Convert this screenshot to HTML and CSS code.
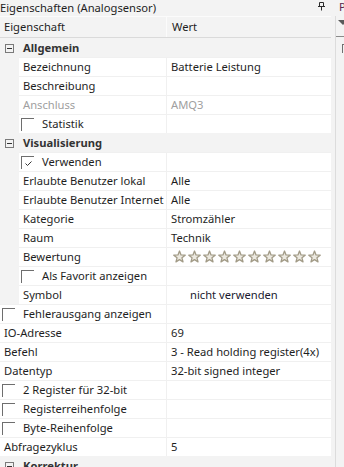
FILE: index.html
```html
<!DOCTYPE html>
<html lang="de">
<head>
<meta charset="utf-8">
<title>Eigenschaften</title>
<link rel="stylesheet" href="styles.css">
</head>
<body>
<div class="window">
  <div class="main">
    <div class="titlebar">
      <span class="title">Eigenschaften (Analogsensor)</span>
      <svg class="pin" width="9" height="9" viewBox="0 0 9 9"><path d="M2.5 0.5h4v4h-4z M1 4.5h7 M4.5 4.5v4" fill="none" stroke="#2b2b2b" stroke-width="1"/></svg>
    </div>
    <div class="grid">
      <div class="hdr"><div class="hname">Eigenschaft</div><div class="hval">Wert</div></div>

      <div class="row cat"><span class="minus"></span>Allgemein</div>
      <div class="row"><div class="ind"></div><div class="nm">Bezeichnung</div><div class="val">Batterie Leistung</div></div>
      <div class="row"><div class="ind"></div><div class="nm">Beschreibung</div><div class="val"></div></div>
      <div class="row dis"><div class="ind"></div><div class="nm">Anschluss</div><div class="val">AMQ3</div></div>
      <div class="row"><div class="ind"></div><div class="nm"><span class="cb"></span>Statistik</div><div class="val"></div></div>

      <div class="row cat"><span class="minus"></span>Visualisierung</div>
      <div class="row"><div class="ind"></div><div class="nm"><span class="cb"><svg width="13" height="13" viewBox="0 0 13 13"><path d="M4.5 7.5l2 2 4-4" fill="none" stroke="#333" stroke-width="1"/></svg></span>Verwenden</div><div class="val"></div></div>
      <div class="row"><div class="ind"></div><div class="nm">Erlaubte Benutzer lokal</div><div class="val">Alle</div></div>
      <div class="row"><div class="ind"></div><div class="nm">Erlaubte Benutzer Internet</div><div class="val">Alle</div></div>
      <div class="row"><div class="ind"></div><div class="nm">Kategorie</div><div class="val">Stromzähler</div></div>
      <div class="row"><div class="ind"></div><div class="nm">Raum</div><div class="val">Technik</div></div>
      <div class="row"><div class="ind"></div><div class="nm">Bewertung</div><div class="val stars">
        <svg width="150" height="14" viewBox="0 0 150 14">
          <defs><polygon id="st" points="6.5,1 8.03,4.9 12.21,5.15 8.97,7.8 10.03,11.85 6.5,9.6 2.97,11.85 4.03,7.8 0.79,5.15 4.97,4.9" fill="#ece9e0" stroke="#a29b87" stroke-width="1.3" stroke-linejoin="round"/></defs>
          <use href="#st" x="0"/><use href="#st" x="15"/><use href="#st" x="30"/><use href="#st" x="45"/><use href="#st" x="60"/><use href="#st" x="75"/><use href="#st" x="90"/><use href="#st" x="105"/><use href="#st" x="120"/><use href="#st" x="135"/>
        </svg></div></div>
      <div class="row"><div class="ind"></div><div class="nm"><span class="cb"></span>Als Favorit anzeigen</div><div class="val"></div></div>
      <div class="row"><div class="ind"></div><div class="nm">Symbol</div><div class="val sym">nicht verwenden</div></div>

      <div class="row"><div class="nm"><span class="cb"></span>Fehlerausgang anzeigen</div><div class="val"></div></div>
      <div class="row"><div class="nm">IO-Adresse</div><div class="val">69</div></div>
      <div class="row"><div class="nm">Befehl</div><div class="val">3 - Read holding register(4x)</div></div>
      <div class="row"><div class="nm">Datentyp</div><div class="val">32-bit signed integer</div></div>
      <div class="row"><div class="nm"><span class="cb"></span>2 Register für 32-bit</div><div class="val"></div></div>
      <div class="row"><div class="nm"><span class="cb"></span>Registerreihenfolge</div><div class="val"></div></div>
      <div class="row"><div class="nm"><span class="cb"></span>Byte-Reihenfolge</div><div class="val"></div></div>
      <div class="row"><div class="nm">Abfragezyklus</div><div class="val">5</div></div>

      <div class="row cat"><span class="minus"></span>Korrektur</div>
    </div>
  </div>
  <div class="divider"></div>
  <div class="side">
    <div class="sideP">P</div>
    <div class="tri"></div>
    <div class="sline"></div>
    <div class="sbox"></div>
  </div>
</div>
</body>
</html>
```
FILE: styles.css
```css
* { box-sizing: border-box; }
html, body { margin: 0; padding: 0; }
body {
  width: 344px;
  height: 467px;
  overflow: hidden;
  background: #f3f3f3;
  font-family: "Segoe UI", "Noto Sans", sans-serif;
  font-size: 11.2px;
  color: #1e1e1e;
}
.window { display: flex; height: 467px; }
.main { width: 335px; display: flex; flex-direction: column; flex: none; }
.titlebar {
  height: 16px;
  display: flex;
  align-items: center;
  justify-content: space-between;
  padding-right: 9px;
}
.title { line-height: 16px; color: #1e1e1e; }
.pin { display: block; margin-top: -4px; }
.grid { width: 331px; }
.hdr {
  display: flex;
  height: 22px;
  border-top: 1px solid #fbfbfb;
  border-bottom: 1px solid #dadada;
}
.hname {
  width: 167px;
  padding-left: 4px;
  line-height: 20px;
  border-right: 1px solid #fbfbfb;
}
.hval { flex: 1; padding-left: 5px; line-height: 20px; }
.row { display: flex; height: 19px; white-space: nowrap; }
.ind { width: 19px; flex: none; background: #f3f3f3; }
.nm {
  flex: 1;
  min-width: 0;
  overflow: hidden;
  background: #fff;
  border-top: 1px solid #f0f0f0;
  border-right: 1px solid #f0f0f0;
  padding-left: 4px;
  line-height: 18px;
  display: flex;
  align-items: center;
}
.val {
  width: 164px;
  flex: none;
  background: #fff;
  border-top: 1px solid #f0f0f0;
  padding-left: 4px;
  line-height: 18px;
  overflow: hidden;
}
.dis .nm, .dis .val { color: #a0a0a0; }
.cat {
  background: #f3f3f3;
  font-weight: bold;
  color: #333;
  align-items: center;
  line-height: 19px;
  padding-left: 5px;
}
.minus {
  width: 9px;
  height: 9px;
  border: 1px solid #7a7a7a;
  margin-right: 9px;
  margin-top: 1px;
  position: relative;
  flex: none;
}
.minus::after {
  content: "";
  position: absolute;
  left: 1px;
  top: 3px;
  width: 5px;
  height: 1px;
  background: #333;
}
.cb {
  width: 13px;
  height: 13px;
  flex: none;
  border-top: 1px solid #6e6e6e;
  border-left: 1px solid #6e6e6e;
  margin-left: -2px;
  margin-right: 8px;
  position: relative;
}
.cb svg { position: absolute; left: -1px; top: -1px; }
.stars { padding-left: 6px; display: flex; align-items: center; }
.stars svg { display: block; }
.sym { padding-left: 23px; color: #1a1a30; }
.divider { width: 1px; flex: none; margin-top: 16px; background: #dcdcdc; }
.side { flex: 1; overflow: hidden; }
.sideP { height: 16px; line-height: 14px; padding-left: 3px; color: #5c2a4e; }
.tri {
  width: 0; height: 0;
  margin-top: 4px;
  margin-left: 2px;
  border-left: 5px solid transparent;
  border-right: 5px solid transparent;
  border-top: 5px solid #5a5a5a;
}
.sline { height: 1px; background: #8a8a8a; margin-top: 11px; }
.sbox {
  width: 10px; height: 9px;
  margin-top: 7px;
  margin-left: 6px;
  border-top: 1px solid #707070;
  border-left: 1px solid #707070;
}
```
